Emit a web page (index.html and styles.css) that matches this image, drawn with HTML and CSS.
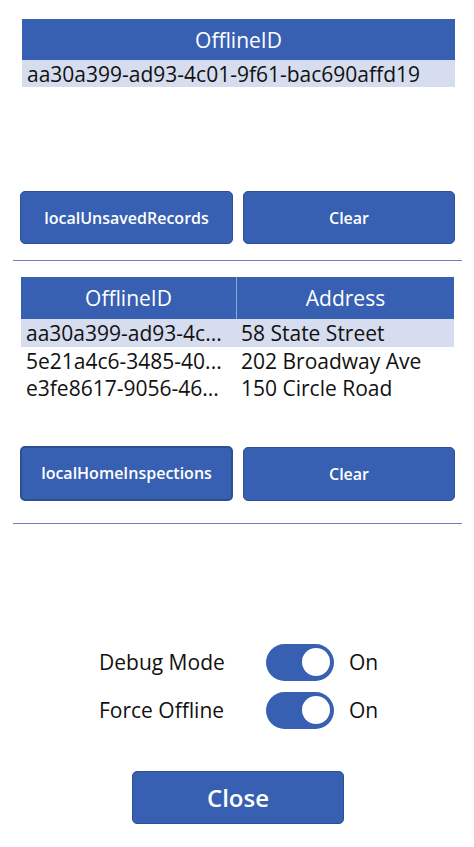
FILE: index.html
```html
<!DOCTYPE html>
<html>
<head>
<meta charset="utf-8">
<link rel="stylesheet" href="styles.css">
</head>
<body>
<div class="screen">
  <div class="table t1">
    <div class="thead"><div class="th">OfflineID</div></div>
    <div class="tr sel"><div class="td">aa30a399-ad93-4c01-9f61-bac690affd19</div></div>
  </div>

  <div class="btnrow r1">
    <button class="btn">localUnsavedRecords</button>
    <button class="btn">Clear</button>
  </div>
  <div class="divider d1"></div>

  <div class="table t2">
    <div class="thead two"><div class="th">OfflineID</div><div class="th">Address</div></div>
    <div class="tr two sel"><div class="td">aa30a399-ad93-4c...</div><div class="td">58 State Street</div></div>
    <div class="tr two"><div class="td">5e21a4c6-3485-40...</div><div class="td">202 Broadway Ave</div></div>
    <div class="tr two"><div class="td">e3fe8617-9056-46...</div><div class="td">150 Circle Road</div></div>
  </div>

  <div class="btnrow r2">
    <button class="btn focus">localHomeInspections</button>
    <button class="btn">Clear</button>
  </div>
  <div class="divider d2"></div>

  <div class="toggles">
    <div class="trow">
      <span class="tlabel">Debug Mode</span>
      <span class="switch"><span class="knob"></span></span>
      <span class="tval">On</span>
    </div>
    <div class="trow">
      <span class="tlabel">Force Offline</span>
      <span class="switch"><span class="knob"></span></span>
      <span class="tval">On</span>
    </div>
  </div>

  <div class="closewrap"><button class="btn close">Close</button></div>
</div>
</body>
</html>
```

FILE: styles.css
```css
* { box-sizing: border-box; }
html, body { margin: 0; padding: 0; background: #fff; }
body { font-family: "Open Sans", "Noto Sans", sans-serif; color: #111; }
.screen { width: 474px; height: 847px; position: relative; padding-top: 19px; }

.table { margin-left: 22px; width: 433px; }
.t2 { margin-left: 21px; margin-top: 16px; }
.thead { background: #3860b2; color: #fff; height: 41px; display: flex; align-items: center; justify-content: center; font-size: 21px; }
.t2 .thead { height: 42px; }
.thead.two { display: grid; grid-template-columns: 215px 1fr; height: 42px; align-items: stretch; }
.thead.two .th { display: flex; align-items: center; justify-content: center; }
.thead.two .th + .th { border-left: 1px solid #8fa6d8; }
.tr { height: 27px; display: flex; align-items: center; font-size: 21px; padding-left: 5px; white-space: nowrap; }
.tr.sel { background: #d6ddef; }
.tr.two { display: grid; grid-template-columns: 215px 1fr; padding-left: 0; height: 27.5px; align-items: center; }
.tr.two .td:first-child { padding-left: 5px; }
.tr.two .td + .td { padding-left: 5px; }

.btnrow { display: grid; grid-template-columns: 213px 212px; column-gap: 10px; margin-left: 20px; }
.r1 { margin-top: 104px; }
.r2 { margin-top: 44px; }
.btn { height: 53px; background: #3860b2; color: #fff; border: 1px solid #2d4f95; border-radius: 5px; font-family: inherit; font-weight: 600; font-size: 16px; padding: 0; }
.r2 .btn { height: 55px; }
.r2 .btn + .btn { height: 54px; margin-top: 1px; }
.btn.focus { border: 2px solid #2d4f95; }

.divider { height: 1px; background: #6b7fc2; margin-left: 13px; width: 449px; }
.d1 { margin-top: 16px; }
.d2 { margin-top: 22px; }

.toggles { margin-top: 120px; display: flex; flex-direction: column; gap: 11px; margin-left: 99px; }
.trow { display: flex; align-items: center; height: 37px; }
.tlabel { width: 167px; font-size: 21px; }
.switch { width: 68px; height: 37px; background: #3860b2; border-radius: 19px; position: relative; display: inline-block; }
.knob { position: absolute; width: 28px; height: 28px; border-radius: 50%; background: #fff; top: 4.5px; right: 4px; }
.tval { margin-left: 15px; font-size: 21px; }

.closewrap { margin-top: 42px; margin-left: 132px; }
.btn.close { width: 212px; height: 53px; font-size: 24px; padding-top: 1px; }
```
